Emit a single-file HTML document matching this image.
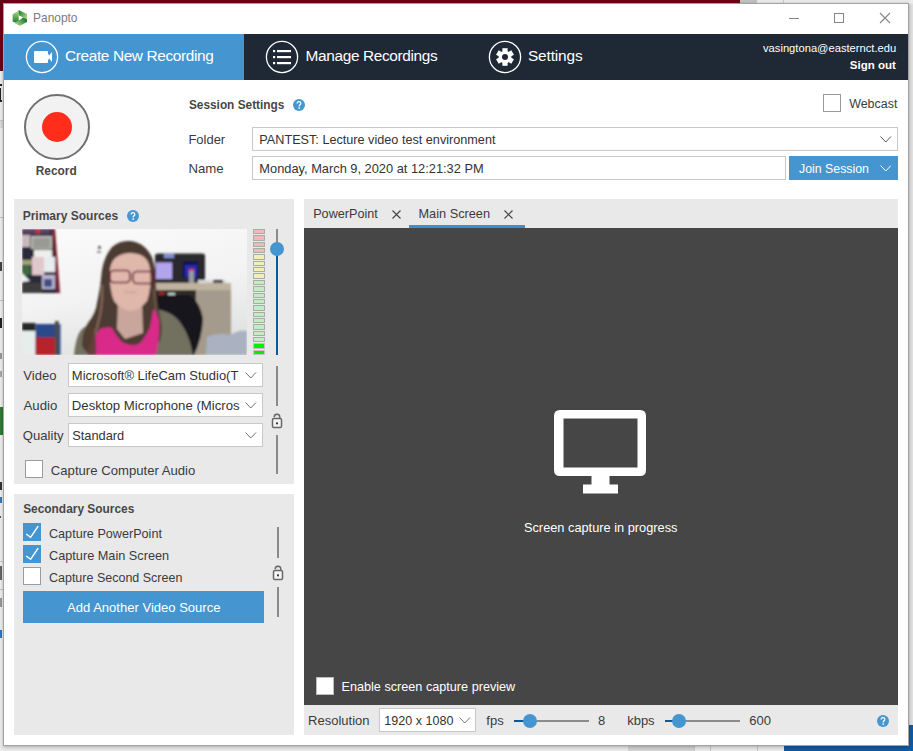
<!DOCTYPE html>
<html><head><meta charset="utf-8">
<style>
*{margin:0;padding:0;box-sizing:border-box}
html,body{width:913px;height:751px;overflow:hidden;background:#e8e8e8;font-family:"Liberation Sans",sans-serif;color:#333}
.a{position:absolute}
.t{position:absolute;white-space:nowrap;line-height:1}
.inp{position:absolute;background:#fff;border:1px solid #c8c8c8}
</style></head><body>
<div class="a" style="left:0px;top:0px;width:740px;height:4px;background:#6d0016;"></div>
<div class="a" style="left:0px;top:0px;width:3px;height:71px;background:#6d0016;"></div>
<div class="a" style="left:0px;top:71px;width:3px;height:680px;background:#f2f2f2;"></div>
<div class="a" style="left:740px;top:0px;width:17px;height:4px;background:#c4c4c4;"></div>
<div class="a" style="left:757px;top:0px;width:156px;height:4px;background:#ececec;"></div>
<div class="a" style="left:908px;top:4px;width:5px;height:721px;background:#e2e2e2;"></div>
<div class="a" style="left:784px;top:725px;width:129px;height:26px;background:#0f5ba6;"></div>
<div class="a" style="left:0px;top:745px;width:784px;height:6px;background:#ececec;"></div>
<div class="a" style="left:628px;top:745px;width:66px;height:6px;background:#d4d4d4;"></div>
<div class="a" style="left:694px;top:745px;width:1px;height:6px;background:#c8c8c8;"></div>
<div class="a" style="left:710px;top:745px;width:1px;height:6px;background:#c8c8c8;"></div>
<div class="a" style="left:757px;top:745px;width:1px;height:6px;background:#c8c8c8;"></div>
<div class="a" style="left:783px;top:0px;width:1px;height:4px;background:#c8c8c8;"></div>
<div class="a" style="left:0px;top:84px;width:2px;height:2px;background:#222;"></div>
<div class="a" style="left:0px;top:88px;width:1px;height:12px;background:#222;"></div>
<div class="a" style="left:0px;top:100px;width:2px;height:2px;background:#222;"></div>
<div class="a" style="left:0px;top:120px;width:3px;height:1px;background:#c8c8c8;"></div>
<div class="a" style="left:0px;top:121px;width:3px;height:7px;background:#dcdcdc;"></div>
<div class="a" style="left:0px;top:217px;width:3px;height:1px;background:#c8c8c8;"></div>
<div class="a" style="left:0px;top:262px;width:2px;height:9px;background:#444;"></div>
<div class="a" style="left:0px;top:300px;width:3px;height:1px;background:#c8c8c8;"></div>
<div class="a" style="left:0px;top:318px;width:2px;height:10px;background:#222;"></div>
<div class="a" style="left:0px;top:353px;width:2px;height:6px;background:#999;"></div>
<div class="a" style="left:0px;top:371px;width:2px;height:6px;background:#aaa;"></div>
<div class="a" style="left:0px;top:407px;width:3px;height:28px;background:#2e7d32;"></div>
<div class="a" style="left:0px;top:482px;width:2px;height:8px;background:#333;"></div>
<div class="a" style="left:0px;top:497px;width:2px;height:6px;background:#3a78c0;"></div>
<div class="a" style="left:0px;top:516px;width:1px;height:2px;background:#555;"></div>
<div class="a" style="left:0px;top:561px;width:3px;height:1px;background:#c8c8c8;"></div>
<div class="a" style="left:0px;top:589px;width:3px;height:1px;background:#c8c8c8;"></div>
<div class="a" style="left:0px;top:566px;width:2px;height:14px;background:#666;"></div>
<div class="a" style="left:0px;top:598px;width:2px;height:9px;background:#999;"></div>
<div class="a" style="left:0px;top:630px;width:2px;height:8px;background:#2a78c8;"></div>
<div class="a" style="left:3px;top:3px;width:906px;height:743px;background:#fff;box-shadow:0 1px 4px rgba(0,0,0,.3);border:1px solid rgba(0,0,0,.36)"></div>
<svg class="a" style="left:10px;top:8px" width="20" height="20" viewBox="10 8 20 20">
  <defs>
   <linearGradient id="gL" x1="0" y1="0" x2="0" y2="1"><stop offset="0" stop-color="#b4d87c"/><stop offset="1" stop-color="#107a38"/></linearGradient>
   <linearGradient id="gT" x1="0" y1="0" x2="1" y2="0.6"><stop offset="0" stop-color="#0e7636"/><stop offset="1" stop-color="#a6d070"/></linearGradient>
   <linearGradient id="gB" x1="1" y1="0.3" x2="0" y2="0.8"><stop offset="0" stop-color="#0e7636"/><stop offset="1" stop-color="#b8dc80"/></linearGradient>
  </defs>
  <path d="M12.6 14.2 L18.6 10.8 L18.8 20.6 L16.4 23.2 L12.6 21.6 Z" fill="url(#gL)"/>
  <path d="M18.6 10 L27 14 L27 19.2 L23.2 17.6 L18.8 15.2 Z" fill="url(#gT)"/>
  <path d="M18.8 20.6 L23.2 17.6 L27 19.2 L27 22 L19.8 25.8 L14.4 23 Z" fill="url(#gB)"/>
</svg>
<div class="t" style="left:33.04px;top:13.39px;font-size:11.94px;color:#7b7b7b;">Panopto</div>
<div class="a" style="left:789px;top:18px;width:10px;height:1px;background:#868686;"></div>
<div class="a" style="left:834px;top:13px;width:10px;height:10px;background:transparent;border:1px solid #868686"></div>
<svg class="a" style="left:879px;top:12px" width="12" height="12" viewBox="0 0 12 12"><path d="M1 1L11 11M11 1L1 11" stroke="#868686" stroke-width="1.1"/></svg>
<div class="a" style="left:4px;top:34px;width:240px;height:46px;background:#4596d0;"></div>
<div class="a" style="left:244px;top:34px;width:664px;height:46px;background:#1f2835;"></div>
<svg class="a" style="left:25px;top:40px" width="34" height="34" viewBox="0 0 34 34">
  <circle cx="17" cy="17" r="15.6" fill="none" stroke="#fff" stroke-width="1.3"/>
  <rect x="9" y="11" width="14" height="12" rx="1" fill="#fff"/>
  <polygon points="23,17 27,12 27,22" fill="#fff"/>
  <rect x="22" y="14.5" width="2" height="5" fill="#fff"/>
</svg>
<svg class="a" style="left:265px;top:40px" width="34" height="34" viewBox="0 0 34 34">
  <circle cx="17" cy="17" r="15.6" fill="none" stroke="#fff" stroke-width="1.3"/>
  <rect x="8" y="10" width="2.2" height="2.2" fill="#fff"/><rect x="12" y="10" width="14" height="2.2" fill="#fff"/>
  <rect x="8" y="16" width="2.2" height="2.2" fill="#fff"/><rect x="12" y="16" width="14" height="2.2" fill="#fff"/>
  <rect x="8" y="22" width="2.2" height="2.2" fill="#fff"/><rect x="12" y="22" width="14" height="2.2" fill="#fff"/>
</svg>
<svg class="a" style="left:488px;top:40px" width="34" height="34" viewBox="0 0 34 34">
  <circle cx="17" cy="17" r="15.6" fill="none" stroke="#fff" stroke-width="1.3"/>
  <g fill="#fff" transform="translate(17 17)">
    <circle r="6.3"/>
    <rect x="-2.6" y="-8.8" width="5.2" height="17.6"/>
    <rect x="-2.6" y="-8.8" width="5.2" height="17.6" transform="rotate(60)"/>
    <rect x="-2.6" y="-8.8" width="5.2" height="17.6" transform="rotate(120)"/>
  </g>
  <circle cx="17" cy="17" r="3" fill="#1f2835"/>
</svg>
<div class="t" style="left:65px;top:48.21px;font-size:15.4px;letter-spacing:-0.368px;color:#fff;">Create New Recording</div>
<div class="t" style="left:305.6px;top:48.21px;font-size:15.4px;letter-spacing:-0.35px;color:#fff;">Manage Recordings</div>
<div class="t" style="left:528px;top:48.21px;font-size:15.4px;letter-spacing:-0.143px;color:#fff;">Settings</div>
<div class="t" style="left:762.99px;top:42.53px;font-size:11.19px;color:#fff;">vasingtona@easternct.edu</div>
<div class="t" style="left:849.85px;top:59.85px;font-size:11.52px;font-weight:bold;color:#fff;">Sign out</div>
<div class="a" style="left:24px;top:94px;width:66px;height:66px;background:#f2f2f2;border-radius:50%;border:2px solid #707070"></div>
<div class="a" style="left:42px;top:112px;width:30px;height:30px;background:#ff2d1a;border-radius:50%"></div>
<div class="t" style="left:35.77px;top:165.72px;font-size:11.9px;font-weight:bold;color:#474747;">Record</div>
<div class="t" style="left:188.94px;top:99.67px;font-size:11.85px;font-weight:bold;color:#474747;">Session Settings</div>
<svg class="a" style="left:293px;top:99px" width="12" height="12" viewBox="0 0 12 12"><circle cx="6" cy="6" r="6" fill="#4597d2"/><path d="M4.2 4.5 Q4.2 2.6 6 2.6 Q7.8 2.6 7.8 4.3 Q7.8 5.3 6.9 5.9 Q6.2 6.3 6.2 7.4" fill="none" stroke="#fff" stroke-width="1.25"/><circle cx="6.2" cy="9.1" r="0.85" fill="#fff"/></svg>
<div class="a" style="left:823px;top:94px;width:18px;height:18px;background:#fff;border:1px solid #9b9b9b"></div>
<div class="t" style="left:849.18px;top:98.47px;font-size:12.44px;color:#3b3b3b;">Webcast</div>
<div class="t" style="left:188.46px;top:133.83px;font-size:12.96px;color:#3b3b3b;">Folder</div>
<div class="inp" style="left:252px;top:127px;width:646px;height:24px"></div>
<div class="t" style="left:259.34px;top:134.48px;font-size:12.66px;color:#333;">PANTEST: Lecture video test environment</div>
<svg class="a" style="left:880px;top:136px" width="11.5" height="6.5" viewBox="0 0 11.5 6.5"><path d="M0.5 0.5 L5.75 6.0 L11.0 0.5" fill="none" stroke="#555" stroke-width="1"/></svg>
<div class="t" style="left:188.44px;top:161.64px;font-size:13.19px;color:#3b3b3b;">Name</div>
<div class="inp" style="left:252px;top:156px;width:534px;height:24px"></div>
<div class="t" style="left:259.32px;top:163.33px;font-size:12.84px;color:#333;">Monday, March 9, 2020 at 12:21:32 PM</div>
<div class="a" style="left:789px;top:156px;width:109px;height:24px;background:#4596d0;"></div>
<div class="t" style="left:799.05px;top:163.25px;font-size:12.34px;color:#fff;">Join Session</div>
<svg class="a" style="left:879.5px;top:165px" width="11.5" height="6.5" viewBox="0 0 11.5 6.5"><path d="M0.5 0.5 L5.75 6.0 L11.0 0.5" fill="none" stroke="#fff" stroke-width="1"/></svg>
<div class="a" style="left:14px;top:199px;width:280px;height:285px;background:#e9e9e9;"></div>
<div class="t" style="left:22.66px;top:209.72px;font-size:12.03px;font-weight:bold;color:#474747;">Primary Sources</div>
<svg class="a" style="left:127px;top:210px" width="12" height="12" viewBox="0 0 12 12"><circle cx="6" cy="6" r="6" fill="#4597d2"/><path d="M4.2 4.5 Q4.2 2.6 6 2.6 Q7.8 2.6 7.8 4.3 Q7.8 5.3 6.9 5.9 Q6.2 6.3 6.2 7.4" fill="none" stroke="#fff" stroke-width="1.25"/><circle cx="6.2" cy="9.1" r="0.85" fill="#fff"/></svg>
<div class="a" style="left:22px;top:229px;width:225px;height:126px;overflow:hidden"><svg width="225" height="126" viewBox="0 0 225 126">
 <defs>
  <linearGradient id="wall" x1="0" y1="0" x2="0.3" y2="1"><stop offset="0" stop-color="#fbfbfb"/><stop offset="0.6" stop-color="#f1f2f1"/><stop offset="1" stop-color="#e2e4e3"/></linearGradient>
  <filter id="bl" x="-5%" y="-5%" width="110%" height="110%"><feGaussianBlur stdDeviation="1"/></filter>
 </defs>
 <rect width="225" height="126" fill="url(#wall)"/>
 <g filter="url(#bl)">
 <!-- bulletin board -->
 <path d="M0 0 H30 L37.5 64 H0 Z" fill="#2b2c3a"/>
 <path d="M30 0 H33 L38 64 H35 Z" fill="#7c1f2a"/>
 <rect x="0" y="0" width="28" height="5" fill="#5a4060"/>
 <rect x="14" y="0" width="4" height="5" fill="#c03040"/>
 <rect x="9" y="7" width="21" height="13" fill="#b8b8b4"/>
 <rect x="11" y="9" width="17" height="10" fill="#9a9a94"/>
 <rect x="0" y="6" width="8" height="12" fill="#c8b8bc"/>
 <rect x="12" y="21" width="18" height="12" fill="#eeeeec"/>
 <rect x="20" y="28" width="13" height="15" fill="#e8ecf0"/>
 <rect x="10" y="28" width="12" height="18" fill="#e0c8cc"/>
 <rect x="0" y="31" width="10" height="5" fill="#a0a078"/>
 <rect x="0" y="37" width="8" height="9" fill="#3e6a40"/>
 <path d="M0 44 L8 52 L0 53 Z" fill="#f4f4f4"/>
 <rect x="20" y="46" width="13" height="14" fill="#b8b0d0"/>
 <rect x="22" y="50" width="8" height="8" fill="#405080"/>
 <rect x="0" y="54" width="20" height="10" fill="#3e3a3a"/>
 <!-- small wall thing -->
 <rect x="76" y="17" width="3" height="3" fill="#707070"/>
 <rect x="75" y="22" width="4" height="2" fill="#909090"/>
 <!-- printer -->
 <rect x="133" y="24.5" width="50" height="32" rx="2.5" fill="#29292e"/>
 <rect x="142" y="25" width="10" height="4" fill="#8090d0"/>
 <rect x="134" y="33.5" width="16" height="16.5" fill="#b4a4ee"/>
 <rect x="160.5" y="32" width="16" height="17" fill="#15154a"/>
 <rect x="163" y="36" width="12" height="12" fill="#2a2ab0"/>
 <rect x="167" y="40" width="5" height="16" fill="#9a9aa0"/>
 <rect x="167" y="40" width="5" height="2" fill="#d04040"/>
 <rect x="176" y="51" width="28" height="5" fill="#d6d8d8"/>
 <rect x="191" y="51" width="10" height="4" fill="#404040"/>
 <!-- shelf -->
 <rect x="133" y="55" width="76" height="71" fill="#a59b8c"/>
 <rect x="133" y="54" width="76" height="7" fill="#bfb3a0"/>
 <rect x="134" y="61" width="40" height="12" fill="#2e2a28"/>
 <rect x="137" y="63" width="5" height="3" fill="#a02020"/>
 <rect x="146" y="64" width="7" height="5" fill="#c8d8d0"/>
 <!-- chair -->
 <path d="M133 66 L167 66 Q178 72 181 90 Q180 110 172 126 L133 126 Z" fill="#18181e"/>
 <!-- plastic bag -->
 <path d="M185 108 Q196 103 208 106 Q218 100 225 102 L225 126 L184 126 Z" fill="#aab2c2"/>
 <!-- left stuff -->
 <rect x="0" y="102" width="13.5" height="24" fill="#e6eeec"/>
 <rect x="0" y="94" width="13.5" height="8" fill="#262628"/>
 <rect x="13.5" y="95" width="25" height="31" fill="#2c4a8a"/>
 <rect x="13.5" y="108.5" width="21.5" height="17.5" fill="#b8202c"/>
 <rect x="33" y="92" width="3.7" height="34" fill="#4c4c4c"/>
 <!-- cardigan -->
 <path d="M52 126 Q54 106 60 100 Q72 90 92 84 L128 80 Q150 80 160 96 Q168 108 171 126 Z" fill="#72705f"/>
 <!-- hair -->
 <path d="M60 116 Q60 104 66 94 Q74 84 75 74 Q78 60 79 50 Q80 30 90 18 Q98 11 108 12 Q122 13 130 28 Q134 40 134 56 Q135 74 138 88 Q141 100 138 112 Q132 120 120 124 L74 126 Q62 124 60 116 Z" fill="#4c3a32"/>
 <path d="M80 56 Q82 84 70 112" stroke="#7e6454" stroke-width="2.5" fill="none"/>
 <path d="M132 60 Q134 86 136 104" stroke="#6e5646" stroke-width="2" fill="none"/>
 <!-- neck -->
 <path d="M96 72 L120 72 L121 104 L103 110 L95 100 Z" fill="#c8a69c"/>
 <!-- face -->
 <path d="M88 40 Q90 25 108 24 Q126 24 128 40 Q130 58 125 72 Q117 82 108 82 Q98 80 92 72 Q87 60 88 40 Z" fill="#dfb7ab"/>
 <!-- glasses -->
 <g fill="none" stroke="#6a1c2c" stroke-width="1.7"><rect x="88" y="41.5" width="20" height="12" rx="4"/><rect x="111" y="42.5" width="21" height="12" rx="4"/></g>
 <path d="M102 63 Q108 64 114 63" stroke="#c89088" stroke-width="0.9" fill="none"/>
 <!-- scarf -->
 <path d="M66 126 Q68 112 78 100 Q86 97 90 99 Q95 108 100 113 Q108 118 117 115 Q124 108 128 98 Q130 88 131 80 Q136 84 137 92 Q138 110 134 126 Z" fill="#d92c8a"/>
 <!-- hair over scarf left -->
 <path d="M66 94 Q76 100 74 126 L66 126 Q60 112 66 94 Z" fill="#54402f" opacity="0.85"/>
 </g>
</svg>
</div>
<div class="a" style="left:253px;top:229px;width:12px;height:5px;background:#f0b9b9;border:1px solid #a6aea6"></div>
<div class="a" style="left:253px;top:235px;width:12px;height:6px;background:#f0b9b9;border:1px solid #a6aea6"></div>
<div class="a" style="left:253px;top:242px;width:12px;height:5px;background:#f0b9b9;border:1px solid #a6aea6"></div>
<div class="a" style="left:253px;top:248px;width:12px;height:5px;background:#f0b9b9;border:1px solid #a6aea6"></div>
<div class="a" style="left:253px;top:254px;width:12px;height:6px;background:#f2eeb6;border:1px solid #a6aea6"></div>
<div class="a" style="left:253px;top:261px;width:12px;height:5px;background:#f2eeb6;border:1px solid #a6aea6"></div>
<div class="a" style="left:253px;top:267px;width:12px;height:5px;background:#f2eeb6;border:1px solid #a6aea6"></div>
<div class="a" style="left:253px;top:273px;width:12px;height:6px;background:#f2eeb6;border:1px solid #a6aea6"></div>
<div class="a" style="left:253px;top:280px;width:12px;height:5px;background:#c0eec0;border:1px solid #a6aea6"></div>
<div class="a" style="left:253px;top:286px;width:12px;height:6px;background:#c0eec0;border:1px solid #a6aea6"></div>
<div class="a" style="left:253px;top:293px;width:12px;height:5px;background:#c0eec0;border:1px solid #a6aea6"></div>
<div class="a" style="left:253px;top:299px;width:12px;height:5px;background:#c0eec0;border:1px solid #a6aea6"></div>
<div class="a" style="left:253px;top:305px;width:12px;height:6px;background:#c0eec0;border:1px solid #a6aea6"></div>
<div class="a" style="left:253px;top:312px;width:12px;height:5px;background:#c0eec0;border:1px solid #a6aea6"></div>
<div class="a" style="left:253px;top:318px;width:12px;height:5px;background:#c0eec0;border:1px solid #a6aea6"></div>
<div class="a" style="left:253px;top:324px;width:12px;height:6px;background:#c0eec0;border:1px solid #a6aea6"></div>
<div class="a" style="left:253px;top:331px;width:12px;height:5px;background:#c0eec0;border:1px solid #a6aea6"></div>
<div class="a" style="left:253px;top:337px;width:12px;height:5px;background:#c0eec0;border:1px solid #a6aea6"></div>
<div class="a" style="left:253px;top:343px;width:12px;height:6px;background:#00f000;border:1px solid #d0bcc8"></div>
<div class="a" style="left:253px;top:350px;width:12px;height:5px;background:#00f000;border:1px solid #d0bcc8"></div>
<div class="a" style="left:276px;top:229px;width:2px;height:20px;background:#8c8c8c;"></div>
<div class="a" style="left:276px;top:249px;width:2px;height:106px;background:#005c9e;"></div>
<div class="a" style="left:270px;top:242px;width:14px;height:14px;background:#4596d0;border-radius:50%"></div>
<div class="a" style="left:276px;top:366px;width:2px;height:40px;background:#8a8a8a;"></div>
<svg class="a" style="left:269.2px;top:413px" width="16" height="20" viewBox="-8 -10 16 20"><path d="M-2.8 -5.8 A2.8 2.8 0 0 1 2.8 -6.2 V-4.6" fill="none" stroke="#686868" stroke-width="1.4"/><rect x="-4.5" y="-4.4" width="9" height="9" rx="1.3" fill="#f4f4f4" stroke="#686868" stroke-width="1.5"/><rect x="-0.95" y="-0.6" width="1.9" height="1.9" fill="#333"/></svg>
<div class="a" style="left:276px;top:435px;width:2px;height:39px;background:#8a8a8a;"></div>
<div class="t" style="left:23.37px;top:368.65px;font-size:13.05px;color:#3b3b3b;">Video</div>
<div class="inp" style="left:68px;top:363px;width:195px;height:24px"></div>
<div class="t" style="left:23.5px;top:398.81px;font-size:13.21px;color:#3b3b3b;">Audio</div>
<div class="inp" style="left:68px;top:393px;width:195px;height:24px"></div>
<div class="t" style="left:22.84px;top:428.91px;font-size:13.1px;color:#3b3b3b;">Quality</div>
<div class="inp" style="left:68px;top:423px;width:195px;height:24px"></div>
<div class="t" style="left:71.86px;top:369.73px;font-size:12.96px;color:#333;">Microsoft® LifeCam Studio(T</div>
<svg class="a" style="left:245px;top:372px" width="11.5" height="6.5" viewBox="0 0 11.5 6.5"><path d="M0.5 0.5 L5.75 6.0 L11.0 0.5" fill="none" stroke="#6e6e6e" stroke-width="1"/></svg>
<div class="t" style="left:71.84px;top:398.84px;font-size:13.19px;color:#333;">Desktop Microphone (Micros</div>
<svg class="a" style="left:245px;top:402px" width="11.5" height="6.5" viewBox="0 0 11.5 6.5"><path d="M0.5 0.5 L5.75 6.0 L11.0 0.5" fill="none" stroke="#6e6e6e" stroke-width="1"/></svg>
<div class="t" style="left:72.16px;top:429.63px;font-size:12.84px;color:#333;">Standard</div>
<svg class="a" style="left:245px;top:432px" width="11.5" height="6.5" viewBox="0 0 11.5 6.5"><path d="M0.5 0.5 L5.75 6.0 L11.0 0.5" fill="none" stroke="#6e6e6e" stroke-width="1"/></svg>
<div class="a" style="left:25px;top:460px;width:18px;height:18px;background:#fff;border:1px solid #9b9b9b"></div>
<div class="t" style="left:50.84px;top:463.97px;font-size:13.14px;color:#3b3b3b;">Capture Computer Audio</div>
<div class="a" style="left:14px;top:494px;width:280px;height:241px;background:#e9e9e9;"></div>
<div class="t" style="left:23.14px;top:503.71px;font-size:11.92px;font-weight:bold;color:#474747;">Secondary Sources</div>
<div class="a" style="left:23px;top:523px;width:18px;height:18px;background:#4596d0"></div><svg class="a" style="left:23px;top:523px" width="18" height="18" viewBox="0 0 18 18"><path d="M3.2 11 L7.6 14.3 L15.2 3.2" fill="none" stroke="#fff" stroke-width="1.5"/></svg>
<div class="t" style="left:48.97px;top:527.8px;font-size:12.64px;color:#3b3b3b;">Capture PowerPoint</div>
<div class="a" style="left:23px;top:545px;width:18px;height:18px;background:#4596d0"></div><svg class="a" style="left:23px;top:545px" width="18" height="18" viewBox="0 0 18 18"><path d="M3.2 11 L7.6 14.3 L15.2 3.2" fill="none" stroke="#fff" stroke-width="1.5"/></svg>
<div class="t" style="left:48.96px;top:549.83px;font-size:12.72px;color:#3b3b3b;">Capture Main Screen</div>
<div class="a" style="left:23px;top:567px;width:18px;height:18px;background:#fff;border:1px solid #9b9b9b"></div>
<div class="t" style="left:48.97px;top:571.9100000000001px;font-size:12.51px;color:#3b3b3b;">Capture Second Screen</div>
<div class="a" style="left:277px;top:527px;width:2px;height:31px;background:#8a8a8a;"></div>
<svg class="a" style="left:270px;top:565px" width="16" height="20" viewBox="-8 -10 16 20"><path d="M-2.8 -5.8 A2.8 2.8 0 0 1 2.8 -6.2 V-4.6" fill="none" stroke="#686868" stroke-width="1.4"/><rect x="-4.5" y="-4.4" width="9" height="9" rx="1.3" fill="#f4f4f4" stroke="#686868" stroke-width="1.5"/><rect x="-0.95" y="-0.6" width="1.9" height="1.9" fill="#333"/></svg>
<div class="a" style="left:277px;top:587px;width:2px;height:30px;background:#8a8a8a;"></div>
<div class="a" style="left:23px;top:591px;width:241px;height:32px;background:#4596d0;"></div>
<div class="t" style="left:67.1px;top:601.06px;font-size:13.04px;color:#fff;">Add Another Video Source</div>
<div class="a" style="left:304px;top:199px;width:594px;height:536px;background:#e9e9e9;"></div>
<div class="a" style="left:304px;top:228px;width:594px;height:477px;background:#464646;"></div>
<div class="t" style="left:313.19px;top:208.3px;font-size:12.64px;color:#3b3b3b;">PowerPoint</div>
<svg class="a" style="left:391.5px;top:209.5px" width="9" height="9" viewBox="0 0 9 9"><path d="M0.5 0.5 L8.5 8.5 M8.5 0.5 L0.5 8.5" stroke="#444" stroke-width="1.1"/></svg>
<div class="t" style="left:418.48px;top:208.2px;font-size:12.76px;color:#3b3b3b;">Main Screen</div>
<svg class="a" style="left:503.5px;top:209.5px" width="9" height="9" viewBox="0 0 9 9"><path d="M0.5 0.5 L8.5 8.5 M8.5 0.5 L0.5 8.5" stroke="#444" stroke-width="1.1"/></svg>
<div class="a" style="left:409px;top:225px;width:116px;height:3px;background:#3d8fd1;"></div>
<svg class="a" style="left:554px;top:410px" width="93" height="84" viewBox="0 0 93 84">
<path fill="#fff" fill-rule="evenodd" d="M6 0 H86 Q92 0 92 6 V60 Q92 66 86 66 H6 Q0 66 0 60 V6 Q0 0 6 0 Z M9.5 8.5 V57.5 H83.5 V8.5 Z"/>
<rect x="37.5" y="66" width="18" height="9" fill="#fff"/>
<rect x="29" y="74.5" width="35" height="9" fill="#fff"/>
</svg>
<div class="t" style="left:523.96px;top:522.08px;font-size:12.79px;color:#fff;">Screen capture in progress</div>
<div class="a" style="left:316px;top:677px;width:18px;height:18px;background:#fff;border:1px solid #bbb"></div>
<div class="t" style="left:341.49px;top:680.58px;font-size:12.66px;color:#fff;">Enable screen capture preview</div>
<div class="t" style="left:308.06px;top:713.88px;font-size:13.01px;color:#3b3b3b;">Resolution</div>
<div class="inp" style="left:379px;top:708px;width:97px;height:24px"></div>
<div class="t" style="left:384.3px;top:715.28px;font-size:12.55px;color:#333;">1920 x 1080</div>
<svg class="a" style="left:459.3px;top:717px" width="11.5" height="6.5" viewBox="0 0 11.5 6.5"><path d="M0.5 0.5 L5.75 6.0 L11.0 0.5" fill="none" stroke="#777" stroke-width="1"/></svg>
<div class="t" style="left:486.37px;top:713.88px;font-size:13.02px;color:#3b3b3b;">fps</div>
<div class="t" style="left:598px;top:713.9px;font-size:13px;color:#3b3b3b">8</div>
<div class="t" style="left:627.19px;top:713.91px;font-size:12.99px;color:#3b3b3b;">kbps</div>
<div class="t" style="left:749.15px;top:713.86px;font-size:13.04px;color:#3b3b3b;">600</div>
<div class="a" style="left:514px;top:720px;width:75px;height:2px;background:#8c8c8c;"></div>
<div class="a" style="left:514px;top:720px;width:15px;height:2px;background:#005c9e;"></div>
<div class="a" style="left:523px;top:714px;width:14px;height:14px;background:#4596d0;border-radius:50%"></div>
<div class="a" style="left:665px;top:720px;width:75px;height:2px;background:#8c8c8c;"></div>
<div class="a" style="left:665px;top:720px;width:14px;height:2px;background:#005c9e;"></div>
<div class="a" style="left:672px;top:714px;width:14px;height:14px;background:#4596d0;border-radius:50%"></div>
<svg class="a" style="left:877px;top:715px" width="12" height="12" viewBox="0 0 12 12"><circle cx="6" cy="6" r="6" fill="#4597d2"/><path d="M4.2 4.5 Q4.2 2.6 6 2.6 Q7.8 2.6 7.8 4.3 Q7.8 5.3 6.9 5.9 Q6.2 6.3 6.2 7.4" fill="none" stroke="#fff" stroke-width="1.25"/><circle cx="6.2" cy="9.1" r="0.85" fill="#fff"/></svg>
</body></html>
